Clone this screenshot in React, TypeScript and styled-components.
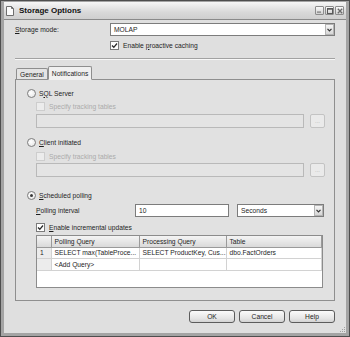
import styled, { createGlobalStyle } from "styled-components";

const GlobalStyle = createGlobalStyle`
  html, body {
    margin: 0;
    padding: 0;
    background: #ffffff;
  }
  body {
    font-family: "Liberation Sans", Arial, sans-serif;
    font-size: 6.7px;
    color: #1e1e1e;
  }
  * {
    box-sizing: border-box;
  }
`;

const Window = styled.div`
  position: relative;
  display: flex;
  flex-direction: column;
  width: 350px;
  height: 337px;
  border: 1px solid #4e4e4e;
  background: #a4a4a4;
  padding: 1px 3px 3px 3px;
`;

const TitleBar = styled.div`
  display: flex;
  align-items: center;
  height: 17px;
  padding: 0 2px 0 2px;
  background: linear-gradient(#f7f7f7, #d9d9d9 60%, #cfcfcf);
`;

const Title = styled.span`
  margin-left: 5px;
  font-size: 8px;
  font-weight: bold;
  color: #111;
  flex: 1;
`;

const CaptionButtons = styled.div`
  display: flex;
  gap: 1px;
`;

const CaptionButton = styled.div`
  display: flex;
  align-items: center;
  justify-content: center;
  width: 9px;
  height: 9px;
  border: 1px solid #8c8c8c;
  border-radius: 1px;
  background: linear-gradient(#fafafa, #d0d0d0);
`;

const Body = styled.div`
  position: relative;
  display: flex;
  flex-direction: column;
  flex: 1;
  background: #dfdfdf;
  border-top: 1px solid #8a8a8a;
  padding: 3px 11px 0 11px;
`;

const FieldRow = styled.div`
  display: flex;
  align-items: center;
  height: 13px;
`;

const Label = styled.span<{ $width?: number }>`
  width: ${(p) => (p.$width ? `${p.$width}px` : "auto")};
  white-space: nowrap;
`;

const Combo = styled.div<{ $width?: number }>`
  display: flex;
  align-items: center;
  height: 13px;
  ${(p) => (p.$width ? `width: ${p.$width}px;` : "flex: 1;")}
  border: 1px solid #7c7c7c;
  background: #ffffff;
  padding-left: 3px;
`;

const ComboText = styled.span`
  flex: 1;
  white-space: nowrap;
`;

const ComboArrow = styled.div`
  display: flex;
  align-items: center;
  justify-content: center;
  width: 9px;
  height: 11px;
  border: 1px solid #b4b4b4;
  background: linear-gradient(#f5f5f5, #d6d6d6);
`;

const CheckRow = styled.div<{ $ml?: number; $mt?: number; $disabled?: boolean }>`
  display: flex;
  align-items: center;
  gap: 4px;
  height: 10px;
  margin-left: ${(p) => p.$ml ?? 0}px;
  margin-top: ${(p) => p.$mt ?? 0}px;
  color: ${(p) => (p.$disabled ? "#ababab" : "#1e1e1e")};
  white-space: nowrap;
`;

const Box = styled.div<{ $disabled?: boolean }>`
  display: flex;
  align-items: center;
  justify-content: center;
  width: 9px;
  height: 9px;
  border: 1px solid ${(p) => (p.$disabled ? "#cdcdcd" : "#7b7b7b")};
  background: ${(p) => (p.$disabled ? "#ececec" : "#ffffff")};
`;

const Separator = styled.div`
  margin-top: 8px;
  border-top: 1px solid #a2a2a2;
  border-bottom: 1px solid #f8f8f8;
`;

const TabStrip = styled.div`
  display: flex;
  align-items: flex-end;
  height: 14px;
  margin-top: 5px;
  padding-left: 1px;
  position: relative;
  z-index: 1;
`;

const Tab = styled.div<{ $active?: boolean }>`
  display: flex;
  align-items: center;
  height: ${(p) => (p.$active ? "14px" : "11px")};
  padding: 0 3px;
  border: 1px solid #8e8e8e;
  border-bottom: ${(p) => (p.$active ? "1px solid #f0f0f0" : "none")};
  border-radius: 2px 2px 0 0;
  background: ${(p) => (p.$active ? "#f0f0f0" : "#e4e4e4")};
  margin-bottom: ${(p) => (p.$active ? "-1px" : "0")};
`;

const Panel = styled.div`
  display: flex;
  flex-direction: column;
  height: 222px;
  border: 1px solid #8f8f8f;
  background: #e1e1e1;
  padding: 0 9px 0 11px;
`;

const RadioRow = styled.div<{ $mt: number }>`
  display: flex;
  align-items: center;
  gap: 3px;
  height: 10px;
  margin-top: ${(p) => p.$mt}px;
  white-space: nowrap;
`;

const RadioCircle = styled.div`
  display: flex;
  align-items: center;
  justify-content: center;
  width: 9px;
  height: 9px;
  border-radius: 50%;
  border: 1px solid #7d7d7d;
  background: radial-gradient(circle at 40% 40%, #ffffff, #e2e2e2);
`;

const RadioDot = styled.div`
  width: 3px;
  height: 3px;
  border-radius: 50%;
  background: #3a3a3a;
`;

const PathRow = styled.div<{ $mt: number }>`
  display: flex;
  gap: 6px;
  margin-left: 9px;
  margin-top: ${(p) => p.$mt}px;
`;

const DisabledInput = styled.div`
  width: 268px;
  height: 14px;
  border: 1px solid #b9b9b9;
  background: #e4e4e4;
`;

const DotsButton = styled.div`
  display: flex;
  align-items: center;
  justify-content: center;
  width: 15px;
  height: 14px;
  border: 1px solid #c3c3c3;
  border-radius: 2px;
  background: #eaeaea;
  color: #b0b0b0;
  font-size: 6px;
`;

const PollingRow = styled.div`
  display: flex;
  align-items: center;
  height: 13px;
  margin-left: 9px;
  margin-top: 4px;
`;

const TextInput = styled.div`
  display: flex;
  align-items: center;
  width: 94px;
  height: 13px;
  border: 1px solid #7c7c7c;
  background: #ffffff;
  padding-left: 3px;
  margin-right: 8px;
`;

const Grid = styled.div`
  width: 287px;
  height: 53px;
  margin-left: 9px;
  margin-top: 3px;
  border: 1px solid #8c8c8c;
  background: #ffffff;
`;

const GridTable = styled.table`
  width: 100%;
  border-collapse: collapse;
  table-layout: fixed;
  font-size: 6.7px;
`;

const HeadCell = styled.th`
  height: 11px;
  padding: 0 0 0 3px;
  font-weight: normal;
  text-align: left;
  white-space: nowrap;
  border-right: 1px solid #9a9a9a;
  border-bottom: 1px solid #9a9a9a;
  background: linear-gradient(#f4f4f4, #d9d9d9);
`;

const Cell = styled.td<{ $h: number; $rowHead?: boolean }>`
  height: ${(p) => p.$h}px;
  padding: 0 0 0 3px;
  white-space: nowrap;
  overflow: hidden;
  border-right: 1px solid #d2d2d2;
  border-bottom: 1px solid #d2d2d2;
  background: ${(p) => (p.$rowHead ? "#ececec" : "#ffffff")};
`;

const ButtonRow = styled.div`
  display: flex;
  justify-content: flex-end;
  gap: 4px;
  margin-top: 9px;
`;

const Button = styled.div`
  display: flex;
  align-items: center;
  justify-content: center;
  width: 46px;
  height: 13px;
  border: 1px solid #5c5c5c;
  border-radius: 3px;
  background: linear-gradient(#fbfbfb, #e4e4e4 70%, #d2d2d2);
`;

const Grip = styled.svg`
  position: absolute;
  right: 0;
  bottom: 0;
`;

const Check = () => (
  <svg width="7" height="7" viewBox="0 0 7 7">
    <path d="M1 3.5 L2.8 5.3 L6 1.5" fill="none" stroke="#2a2a2a" strokeWidth="1.3" />
  </svg>
);

const Arrow = () => (
  <svg width="5" height="4" viewBox="0 0 5 4">
    <path d="M0.5 0.8 L2.5 2.8 L4.5 0.8" fill="none" stroke="#333" strokeWidth="1.2" />
  </svg>
);

export default function App() {
  return (
    <>
      <GlobalStyle />
      <Window>
        <TitleBar>
          <svg width="8" height="10" viewBox="0 0 8 10">
            <path d="M0.5 0.5 H5.5 L7.5 2.5 V9.5 H0.5 Z" fill="#fbfbfb" stroke="#6e6e6e" />
            <path d="M5.5 0.5 V2.5 H7.5" fill="none" stroke="#6e6e6e" />
          </svg>
          <Title>Storage Options</Title>
          <CaptionButtons>
            <CaptionButton>
              <svg width="5" height="5" viewBox="0 0 5 5">
                <rect x="0" y="3.5" width="4" height="1.2" fill="#7a7a7a" />
              </svg>
            </CaptionButton>
            <CaptionButton>
              <svg width="6" height="6" viewBox="0 0 6 6">
                <rect x="0.5" y="0.5" width="5" height="5" fill="none" stroke="#5a5a5a" />
                <rect x="0.5" y="0.5" width="5" height="1.2" fill="#5a5a5a" />
              </svg>
            </CaptionButton>
            <CaptionButton>
              <svg width="6" height="6" viewBox="0 0 6 6">
                <path d="M0.8 0.8 L5.2 5.2 M5.2 0.8 L0.8 5.2" stroke="#6a6a6a" strokeWidth="1.3" />
              </svg>
            </CaptionButton>
          </CaptionButtons>
        </TitleBar>

        <Body>
          <FieldRow>
            <Label $width={95}>
              <u>S</u>torage mode:
            </Label>
            <Combo>
              <ComboText>MOLAP</ComboText>
              <ComboArrow>
                <Arrow />
              </ComboArrow>
            </Combo>
          </FieldRow>
          <CheckRow $ml={95} $mt={4}>
            <Box>
              <Check />
            </Box>
            <span>
              Enable <u>p</u>roactive caching
            </span>
          </CheckRow>

          <Separator />

          <TabStrip>
            <Tab>General</Tab>
            <Tab $active>Notifications</Tab>
          </TabStrip>

          <Panel>
            <RadioRow $mt={8}>
              <RadioCircle />
              <span>
                S<u>Q</u>L Server
              </span>
            </RadioRow>
            <CheckRow $ml={9} $mt={3} $disabled>
              <Box $disabled />
              <span>Specify tracking tables</span>
            </CheckRow>
            <PathRow $mt={3}>
              <DisabledInput />
              <DotsButton>...</DotsButton>
            </PathRow>

            <RadioRow $mt={9}>
              <RadioCircle />
              <span>
                <u>C</u>lient initiated
              </span>
            </RadioRow>
            <CheckRow $ml={9} $mt={4} $disabled>
              <Box $disabled />
              <span>Specify tracking tables</span>
            </CheckRow>
            <PathRow $mt={2}>
              <DisabledInput />
              <DotsButton>...</DotsButton>
            </PathRow>

            <RadioRow $mt={13}>
              <RadioCircle>
                <RadioDot />
              </RadioCircle>
              <span>
                <u>S</u>cheduled polling
              </span>
            </RadioRow>
            <PollingRow>
              <Label $width={99}>
                <u>P</u>olling interval
              </Label>
              <TextInput>10</TextInput>
              <Combo $width={87}>
                <ComboText>Seconds</ComboText>
                <ComboArrow>
                  <Arrow />
                </ComboArrow>
              </Combo>
            </PollingRow>
            <CheckRow $ml={9} $mt={5}>
              <Box>
                <Check />
              </Box>
              <span>
                <u>E</u>nable incremental updates
              </span>
            </CheckRow>

            <Grid>
              <GridTable>
                <colgroup>
                  <col style={{ width: 14 }} />
                  <col style={{ width: 88 }} />
                  <col style={{ width: 87 }} />
                  <col />
                </colgroup>
                <thead>
                  <tr>
                    <HeadCell />
                    <HeadCell>Polling Query</HeadCell>
                    <HeadCell>Processing Query</HeadCell>
                    <HeadCell>Table</HeadCell>
                  </tr>
                </thead>
                <tbody>
                  <tr>
                    <Cell $h={11} $rowHead>
                      1
                    </Cell>
                    <Cell $h={11}>SELECT max(TableProce...</Cell>
                    <Cell $h={11}>SELECT ProductKey, Cus...</Cell>
                    <Cell $h={11}>dbo.FactOrders</Cell>
                  </tr>
                  <tr>
                    <Cell $h={12} $rowHead />
                    <Cell $h={12}>&lt;Add Query&gt;</Cell>
                    <Cell $h={12} />
                    <Cell $h={12} />
                  </tr>
                </tbody>
              </GridTable>
            </Grid>
          </Panel>

          <ButtonRow>
            <Button>OK</Button>
            <Button>Cancel</Button>
            <Button>Help</Button>
          </ButtonRow>

          <Grip width="8" height="8" viewBox="0 0 8 8">
            <g fill="#a0a0a0">
              <rect x="6" y="2" width="1" height="1" />
              <rect x="4" y="4" width="1" height="1" />
              <rect x="6" y="4" width="1" height="1" />
              <rect x="2" y="6" width="1" height="1" />
              <rect x="4" y="6" width="1" height="1" />
              <rect x="6" y="6" width="1" height="1" />
            </g>
          </Grip>
        </Body>
      </Window>
    </>
  );
}
